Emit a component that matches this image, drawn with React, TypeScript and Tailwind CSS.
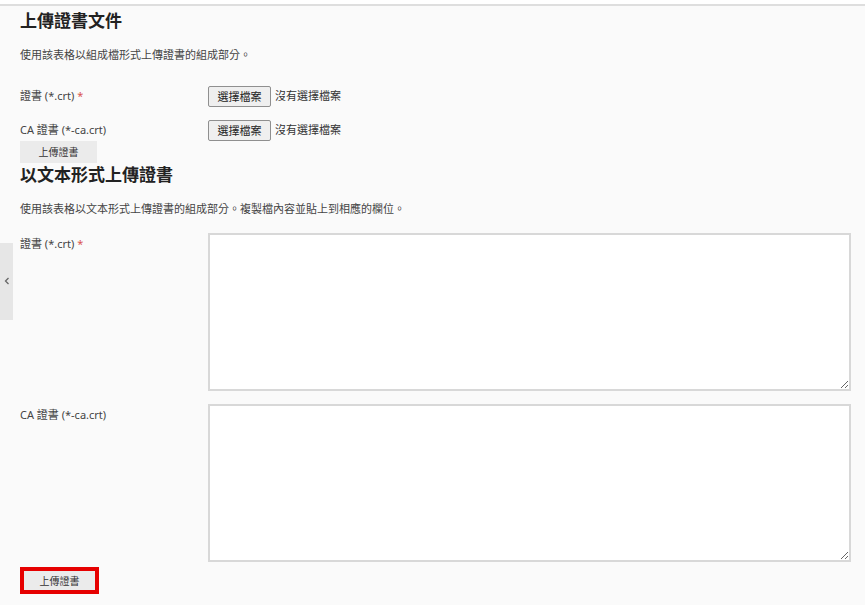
const font = { fontFamily: '"Noto Sans", "Noto Sans CJK TC", sans-serif' };

function Req() {
  return <span className="text-[#d9534f]"> *</span>;
}

function FileRow({ label, required }: { label: string; required?: boolean }) {
  return (
    <div className="flex items-center h-[34px]">
      <div className="w-[188px] text-[11px] text-[#444]">
        {label}
        {required && <Req />}
      </div>
      <button className="h-[21px] w-[63px] border border-[#8f8f8f] rounded-[2px] bg-[#efefef] text-[11px] text-[#222] leading-none">
        選擇檔案
      </button>
      <span className="ml-[4px] text-[11px] text-[#333]">沒有選擇檔案</span>
    </div>
  );
}

function TextRow({ label, required }: { label: string; required?: boolean }) {
  return (
    <div className="flex">
      <div className="w-[188px] pt-[3px] text-[11px] text-[#444]">
        {label}
        {required && <Req />}
      </div>
      <textarea className="w-[643px] h-[158px] border-2 border-[#d8d8d8] bg-white resize-y outline-none" />
    </div>
  );
}

export default function App() {
  return (
    <div className="relative w-[865px] h-[605px] bg-white overflow-hidden" style={font}>
      <div className="h-[4px] bg-white" />
      <div className="h-[601px] border-t-2 border-[#dedede] bg-[#fafafa] pl-[20px]">
        <h2 className="mt-[3px] text-[17px] font-bold text-[#222] leading-[24px]">上傳證書文件</h2>
        <p className="mt-[14px] text-[11px] text-[#444] leading-[16px]">使用該表格以組成檔形式上傳證書的組成部分。</p>
        <div className="mt-[16px]">
          <FileRow label="證書 (*.crt)" required />
          <FileRow label="CA 證書 (*-ca.crt)" />
        </div>
        <button className="mt-[-6px] block h-[22px] w-[77px] bg-[#ebebeb] text-[10px] text-[#333]">上傳證書</button>
        <h2 className="text-[17px] font-bold text-[#222] leading-[24px]">以文本形式上傳證書</h2>
        <p className="mt-[14px] text-[11px] text-[#444] leading-[16px]">使用該表格以文本形式上傳證書的組成部分。複製檔內容並貼上到相應的欄位。</p>
        <div className="mt-[16px] flex flex-col gap-[13px]">
          <TextRow label="證書 (*.crt)" required />
          <TextRow label="CA 證書 (*-ca.crt)" />
        </div>
        <div className="mt-[5px] w-[79px] h-[27px] border-[4px] border-[#e60000] flex items-center justify-center">
          <button className="h-[19px] w-[71px] bg-[#ebebeb] text-[10px] text-[#333] leading-none">上傳證書</button>
        </div>
      </div>
      <div className="absolute left-0 top-[243px] w-[13px] h-[77px] bg-[#e6e6e6] flex items-center justify-center">
        <svg width="6" height="8" viewBox="0 0 6 8" className="mt-[-1px]">
          <path d="M4.5 1 L1.5 4 L4.5 7" fill="none" stroke="#666" strokeWidth="1.3" />
        </svg>
      </div>
    </div>
  );
}
